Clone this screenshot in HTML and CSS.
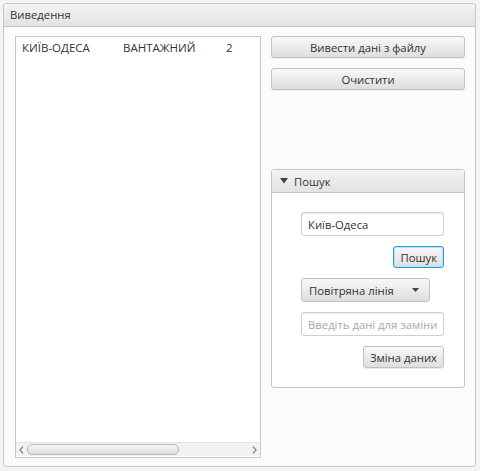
FILE: index.html
```html
<!DOCTYPE html>
<html lang="uk">
  <head>
    <meta charset="UTF-8" />
    <meta name="viewport" content="width=device-width, initial-scale=1.0" />
    <title>Виведення</title>
    <link rel="stylesheet" href="styles.css">
  </head>
  <body>
    <div class="window">
      <section class="pane">
        <div class="pane-head">Виведення</div>
        <div class="pane-body">
          <div class="list">
            <div class="rows">
              <div class="row">
                <span class="col-route">КИЇВ-ОДЕСА</span>
                <span class="col-type">ВАНТАЖНИЙ</span>
                <span class="col-num">2</span>
              </div>
            </div>
            <div class="hscroll">
              <span class="arrow">
                <svg width="5" height="8" viewBox="0 0 5 8"><path d="M4 0.5 L1 4 L4 7.5" fill="none" stroke="#8a8a8a" stroke-width="1.3"/></svg>
              </span>
              <div class="track"><div class="thumb"></div></div>
              <span class="arrow">
                <svg width="5" height="8" viewBox="0 0 5 8"><path d="M1 0.5 L4 4 L1 7.5" fill="none" stroke="#8a8a8a" stroke-width="1.3"/></svg>
              </span>
            </div>
          </div>

          <div class="side">
            <button class="btn wide">Вивести дані з файлу</button>
            <button class="btn wide">Очистити</button>

            <section class="search">
              <div class="search-head">
                <svg width="8" height="6" viewBox="0 0 8 6"><path d="M0 0 H8 L4 5.5 Z" fill="#444"/></svg>
                <span>Пошук</span>
              </div>
              <div class="search-body">
                <input class="field" type="text" value="Київ-Одеса">
                <button class="btn focused">Пошук</button>
                <div class="combo">
                  <span>Повітряна лінія</span>
                  <svg width="7" height="4" viewBox="0 0 7 4"><path d="M0 0 H7 L3.5 4 Z" fill="#444"/></svg>
                </div>
                <input class="field" type="text" placeholder="Введіть дані для заміни">
                <button class="btn">Зміна даних</button>
              </div>
            </section>
          </div>
        </div>
      </section>
    </div>
  </body>
</html>
```

FILE: styles.css
```css
body {
  margin: 0;
  background-color: #f4f4f4;
  font-family: "Open Sans", "Noto Sans", sans-serif;
  font-size: 11.3px;
  color: #333;
}

.window {
  padding: 3px 4px 3px 3px;
}

.pane {
  border: 1px solid #c6c6c6;
  border-radius: 3px;
  background: #fbfbfb;
}

.pane-head {
  height: 22px;
  line-height: 22px;
  padding-left: 6px;
  background: linear-gradient(#f4f4f4, #e2e2e2);
  border-bottom: 1px solid #c6c6c6;
  border-radius: 3px 3px 0 0;
}

.pane-body {
  display: flex;
  gap: 10px;
  padding: 9px 10px 8px 11px;
}

/* list view */
.list {
  width: 244px;
  height: 420px;
  border: 1px solid #c8c8c8;
  background: white;
  display: flex;
  flex-direction: column;
}

.rows {
  flex: 1;
}

.row {
  display: flex;
  height: 22px;
  line-height: 22px;
  padding-left: 6px;
  font-size: 11.5px;
}

.col-route {
  width: 101px;
}

.col-type {
  width: 103px;
}

.hscroll {
  display: flex;
  align-items: center;
  height: 13px;
  margin: 0 0 1px 0;
  background: #f2f2f2;
  border-top: 1px solid #e4e4e4;
}

.arrow {
  width: 11px;
  display: flex;
  justify-content: center;
}

.track {
  flex: 1;
  height: 100%;
  display: flex;
  align-items: center;
}

.thumb {
  width: 150px;
  height: 9px;
  border: 1px solid #b8b8b8;
  border-radius: 5px;
  background: linear-gradient(#f6f6f6, #dcdcdc);
}

/* right side */
.side {
  width: 194px;
  display: flex;
  flex-direction: column;
}

.btn {
  font-family: inherit;
  font-size: 11.3px;
  color: #333;
  height: 22px;
  padding: 0 6px;
  border: 1px solid #c2c2c2;
  border-radius: 3px;
  background: linear-gradient(#f8f8f8, #dedede);
  box-shadow: 0 1px 0 #ececec;
}

.btn.wide {
  width: 100%;
  margin-bottom: 10px;
}

.btn.focused {
  border: 1px solid #1e9fd6;
  box-shadow: inset 0 0 0 1px #b8e2f5;
}

.search {
  margin-top: 69px;
  border: 1px solid #c6c6c6;
  border-radius: 3px;
  background: white;
}

.search-head {
  height: 22px;
  display: flex;
  align-items: center;
  gap: 6px;
  padding-left: 8px;
  background: linear-gradient(#f4f4f4, #e2e2e2);
  border-bottom: 1px solid #c6c6c6;
}

.search-body {
  display: flex;
  flex-direction: column;
  align-items: flex-end;
  gap: 10px;
  padding: 19px 20px 19px 29px;
}

.field {
  box-sizing: border-box;
  width: 143px;
  height: 24px;
  padding: 0 6px;
  border: 1px solid #cfcfcf;
  border-radius: 3px;
  font-family: inherit;
  font-size: 11.3px;
  color: #333;
  box-shadow: inset 0 1px 1px #ececec;
}

.field::placeholder {
  color: #a8a8a8;
}

.combo {
  align-self: flex-start;
  box-sizing: border-box;
  width: 129px;
  height: 24px;
  display: flex;
  align-items: center;
  justify-content: space-between;
  padding: 0 10px 0 7px;
  border: 1px solid #c2c2c2;
  border-radius: 3px;
  background: linear-gradient(#f8f8f8, #dedede);
}
```
